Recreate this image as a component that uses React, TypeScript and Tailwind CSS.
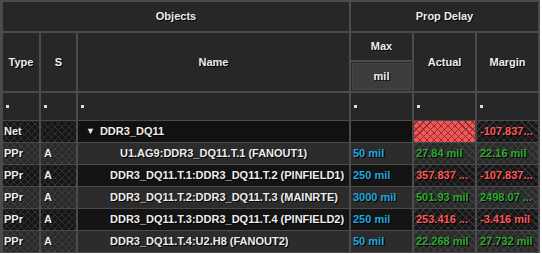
import React from 'react';

type Tone = 'light' | 'dark';

interface Row {
  type: string;
  s: string;
  name: string;
  indent: string;
  tone: Tone;
  max: string;
  actual: string;
  actualBad: boolean;
  margin: string;
  marginBad: boolean;
}

const rows: Row[] = [
  {
    type: 'PPr',
    s: 'A',
    name: 'U1.AG9:DDR3_DQ11.T.1 (FANOUT1)',
    indent: 'pl-[42px]',
    tone: 'light',
    max: '50 mil',
    actual: '27.84 mil',
    actualBad: false,
    margin: '22.16 mil',
    marginBad: false,
  },
  {
    type: 'PPr',
    s: 'A',
    name: 'DDR3_DQ11.T.1:DDR3_DQ11.T.2 (PINFIELD1)',
    indent: 'pl-[32px]',
    tone: 'dark',
    max: '250 mil',
    actual: '357.837 ...',
    actualBad: true,
    margin: '-107.837...',
    marginBad: true,
  },
  {
    type: 'PPr',
    s: 'A',
    name: 'DDR3_DQ11.T.2:DDR3_DQ11.T.3 (MAINRTE)',
    indent: 'pl-[32px]',
    tone: 'light',
    max: '3000 mil',
    actual: '501.93 mil',
    actualBad: false,
    margin: '2498.07 ...',
    marginBad: false,
  },
  {
    type: 'PPr',
    s: 'A',
    name: 'DDR3_DQ11.T.3:DDR3_DQ11.T.4 (PINFIELD2)',
    indent: 'pl-[32px]',
    tone: 'dark',
    max: '250 mil',
    actual: '253.416 ...',
    actualBad: true,
    margin: '-3.416 mil',
    marginBad: true,
  },
  {
    type: 'PPr',
    s: 'A',
    name: 'DDR3_DQ11.T.4:U2.H8 (FANOUT2)',
    indent: 'pl-[32px]',
    tone: 'light',
    max: '50 mil',
    actual: '22.268 mil',
    actualBad: false,
    margin: '27.732 mil',
    marginBad: false,
  },
];

// cross-hatched cell backgrounds
const hatchLight =
  'bg-[#2a2a2a] bg-[image:repeating-linear-gradient(45deg,#3e3e3e_0_1px,transparent_1px_5px),repeating-linear-gradient(-45deg,#3e3e3e_0_1px,transparent_1px_5px)]';
const hatchDark =
  'bg-[#161616] bg-[image:repeating-linear-gradient(45deg,#333333_0_1px,transparent_1px_5px),repeating-linear-gradient(-45deg,#333333_0_1px,transparent_1px_5px)]';
const hatchRed =
  'bg-[#f25656] bg-[image:repeating-linear-gradient(45deg,#8c2e2e_0_1px,transparent_1px_5px),repeating-linear-gradient(-45deg,#8c2e2e_0_1px,transparent_1px_5px)]';

const shadow = '[text-shadow:1px_1px_0_#000]';

function FilterCell() {
  return (
    <div className="bg-[#272727] flex items-center pl-[3px]">
      <span className="w-[3px] h-[3px] bg-[#d4dcec]" />
    </div>
  );
}

export default function App() {
  return (
    <div className="w-[542px] h-[254px] bg-white">
      <div
        className={`w-[540px] bg-[#4b4b4b] pl-[3px] pr-[2px] pt-[2px] pb-[1px] font-['Liberation_Sans',Arial,sans-serif] text-[11px] font-bold text-[#ededed] ${shadow}`}
      >
        {/* Header */}
        <div className="grid grid-cols-[36px_35px_271px_61px_61px_61px] grid-rows-[29px_27px_29px_27px] gap-[2px]">
          <div className="col-start-1 col-span-3 row-start-1 bg-[#272727] flex items-center justify-center">
            Objects
          </div>
          <div className="col-start-4 col-span-3 row-start-1 bg-[#272727] flex items-center justify-center">
            Prop Delay
          </div>
          <div className="col-start-1 row-start-2 row-span-2 bg-[#272727] flex items-center justify-center">
            Type
          </div>
          <div className="col-start-2 row-start-2 row-span-2 bg-[#272727] flex items-center justify-center">
            S
          </div>
          <div className="col-start-3 row-start-2 row-span-2 bg-[#272727] flex items-center justify-center">
            Name
          </div>
          <div className="col-start-4 row-start-2 bg-[#272727] flex items-center justify-center">
            Max
          </div>
          <div className="col-start-5 row-start-2 row-span-2 bg-[#272727] flex items-center justify-center">
            Actual
          </div>
          <div className="col-start-6 row-start-2 row-span-2 bg-[#272727] flex items-center justify-center">
            Margin
          </div>
          <div className="col-start-4 row-start-3 bg-[#2b2b2b] p-[1px]">
            <div className="h-full bg-[#3c3c3c] border border-[#474747] flex items-center justify-center">
              mil
            </div>
          </div>
          <div className="col-start-1 row-start-4 grid">
            <FilterCell />
          </div>
          <div className="col-start-2 row-start-4 grid">
            <FilterCell />
          </div>
          <div className="col-start-3 row-start-4 grid">
            <FilterCell />
          </div>
          <div className="col-start-4 row-start-4 grid">
            <FilterCell />
          </div>
          <div className="col-start-5 row-start-4 grid">
            <FilterCell />
          </div>
          <div className="col-start-6 row-start-4 grid">
            <FilterCell />
          </div>
        </div>

        {/* Body */}
        <div className="mt-[1px] grid grid-cols-[36px_35px_271px_61px_61px_61px] auto-rows-[21px] gap-x-[2px] gap-y-[1px]">
          {/* Net row */}
          <div className={`${hatchDark} flex items-center pl-[1px]`}>Net</div>
          <div className={hatchDark} />
          <div className="bg-[#111111] flex items-center pl-[8px]">
            <span className="text-[9px] mr-[5px]">▼</span>
            DDR3_DQ11
          </div>
          <div className="bg-[#111111]" />
          <div className={hatchRed} />
          <div className={`${hatchDark} flex items-center pl-[3px] text-[#ff5858] whitespace-nowrap overflow-hidden`}>
            -107.837...
          </div>

          {rows.map((r, i) => {
            const hatch = r.tone === 'light' ? hatchLight : hatchDark;
            const plain = r.tone === 'light' ? 'bg-[#2c2c2c]' : 'bg-[#141414]';
            return (
              <React.Fragment key={i}>
                <div className={`${hatch} flex items-center pl-[1px]`}>{r.type}</div>
                <div className={`${hatch} flex items-center pl-[3px]`}>{r.s}</div>
                <div className={`${plain} flex items-center ${r.indent} whitespace-nowrap`}>{r.name}</div>
                <div className={`${plain} flex items-center pl-[2px] text-[#22a6dc] whitespace-nowrap`}>
                  {r.max}
                </div>
                <div
                  className={`${hatch} flex items-center pl-[2px] whitespace-nowrap overflow-hidden ${
                    r.actualBad ? 'text-[#ff5858]' : 'text-[#2fa82f]'
                  }`}
                >
                  {r.actual}
                </div>
                <div
                  className={`${hatch} flex items-center pl-[3px] whitespace-nowrap overflow-hidden ${
                    r.marginBad ? 'text-[#ff5858]' : 'text-[#2fa82f]'
                  }`}
                >
                  {r.margin}
                </div>
              </React.Fragment>
            );
          })}
        </div>
      </div>
    </div>
  );
}
